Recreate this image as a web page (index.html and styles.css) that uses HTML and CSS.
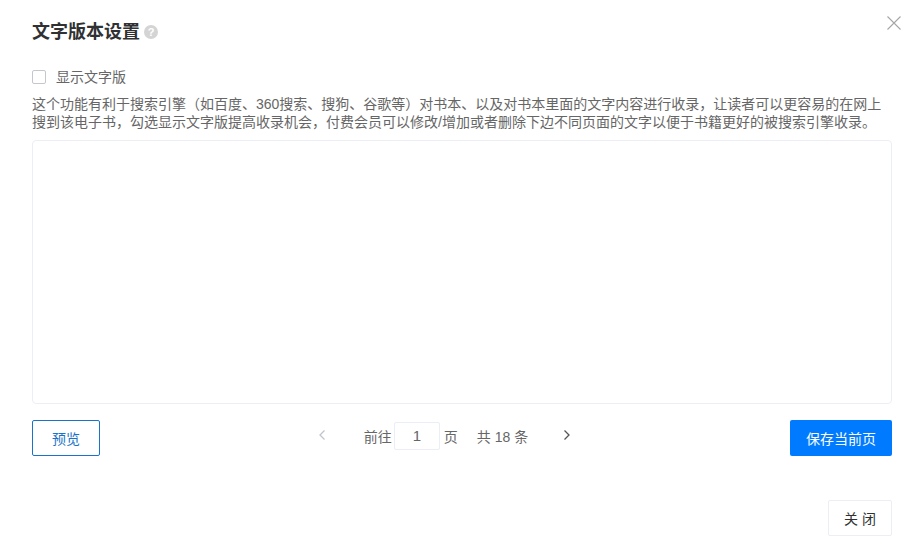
FILE: index.html
```html
<!DOCTYPE html>
<html>
<head>
    <title>文字版本设置</title>
    <meta charset="utf-8">
    <link rel="stylesheet" href="styles.css">
</head>
<body>

<div class="dialog">
    <!-- Close icon -->
    <svg class="close-icon" width="14" height="14" viewBox="0 0 14 14">
        <path d="M0.5 0.5L13.5 13.5M13.5 0.5L0.5 13.5" stroke="#a6a6a6" stroke-width="1.1" fill="none"/>
    </svg>

    <!-- Header -->
    <div class="header">
        <h1>文字版本设置</h1>
        <span class="help-icon">?</span>
    </div>

    <!-- Checkbox row -->
    <label class="check-row">
        <span class="checkbox"></span>
        <span>显示文字版</span>
    </label>

    <p class="desc">这个功能有利于搜索引擎（如百度、360搜索、搜狗、谷歌等）对书本、以及对书本里面的文字内容进行收录，让读者可以更容易的在网上<br>搜到该电子书，勾选显示文字版提高收录机会，付费会员可以修改/增加或者删除下边不同页面的文字以便于书籍更好的被搜索引擎收录。</p>

    <div class="text-box"></div>

    <!-- Toolbar with pagination -->
    <div class="toolbar">
        <button class="btn btn-outline">预览</button>
        <div class="pager">
            <svg class="pager-arrow" width="8" height="12" viewBox="0 0 8 12">
                <path d="M6.5 1.5L2 6L6.5 10.5" stroke="#c0c4cc" stroke-width="1.3" fill="none"/>
            </svg>
            <span class="pager-goto">前往</span>
            <span class="pager-input">1</span>
            <span class="pager-unit">页</span>
            <span class="pager-total">共 18 条</span>
            <svg class="pager-arrow pager-next" width="8" height="12" viewBox="0 0 8 12">
                <path d="M1.5 1.5L6 6L1.5 10.5" stroke="#555" stroke-width="1.3" fill="none"/>
            </svg>
        </div>
        <button class="btn btn-primary">保存当前页</button>
    </div>

    <!-- Footer -->
    <div class="footer">
        <button class="btn btn-close">关 闭</button>
    </div>
</div>

</body>
</html>
```

FILE: styles.css
```css
/* Global Reset */
* {
    margin: 0;
    padding: 0;
    box-sizing: border-box;
    font-family: "Liberation Sans", "Noto Sans CJK SC", sans-serif;
}

body {
    background: #ffffff;
    color: #666666;
    overflow: hidden;
}

/* Dialog */
.dialog {
    position: relative;
    width: 919px;
    height: 554px;
    padding: 20px 27px 0 32px;
}

.close-icon {
    position: absolute;
    top: 16px;
    left: 887px;
}

/* Header */
.header {
    display: flex;
    align-items: center;
    height: 24px;
}

.header h1 {
    font-size: 18px;
    line-height: 24px;
    font-weight: 700;
    color: #303133;
}

.help-icon {
    width: 14px;
    height: 14px;
    margin-left: 4px;
    border-radius: 50%;
    background: #d4d4d4;
    color: #ffffff;
    font-size: 11px;
    font-weight: 700;
    line-height: 14px;
    text-align: center;
}

/* Checkbox */
.check-row {
    display: flex;
    align-items: center;
    height: 20px;
    margin-top: 23px;
    font-size: 14px;
    line-height: 18px;
    color: #666666;
}

.checkbox {
    width: 14px;
    height: 14px;
    margin-right: 10px;
    border: 1px solid #c4c7cf;
    border-radius: 2px;
    background: #ffffff;
}

/* Description */
.desc {
    margin-top: 8px;
    font-size: 14px;
    line-height: 18px;
    color: #666666;
    white-space: nowrap;
}

/* Text area */
.text-box {
    height: 264px;
    margin-top: 9px;
    border: 1px solid #ebeef5;
    border-radius: 4px;
}

/* Toolbar */
.toolbar {
    display: flex;
    justify-content: space-between;
    align-items: center;
    margin-top: 16px;
}

.btn {
    height: 36px;
    border-radius: 2px;
    font-size: 14px;
    cursor: pointer;
}

.btn-outline {
    width: 68px;
    background: #ffffff;
    border: 1px solid #1a73c8;
    color: #1a73c8;
}

.btn-primary {
    width: 102px;
    background: #007bff;
    border: none;
    color: #ffffff;
}

.btn-close {
    width: 64px;
    background: #ffffff;
    border: 1px solid #ebeef5;
    color: #303133;
}

/* Pagination */
.pager {
    display: flex;
    align-items: center;
    margin-bottom: 4px;
    font-size: 14px;
    color: #666666;
}

.pager-arrow {
    margin-left: 4px;
    margin-bottom: 2px;
    flex: none;
}

.pager-goto {
    margin-left: 38px;
}

.pager-input {
    width: 46px;
    height: 28px;
    margin-left: 2px;
    border: 1px solid #ebeef5;
    border-radius: 2px;
    font-size: 15px;
    line-height: 26px;
    text-align: center;
}

.pager-unit {
    margin-left: 4px;
}

.pager-total {
    margin-left: 19px;
}

.pager-next {
    margin-left: 35px;
    margin-right: 5px;
}

/* Footer */
.footer {
    display: flex;
    justify-content: flex-end;
    margin-top: 44px;
}
```
